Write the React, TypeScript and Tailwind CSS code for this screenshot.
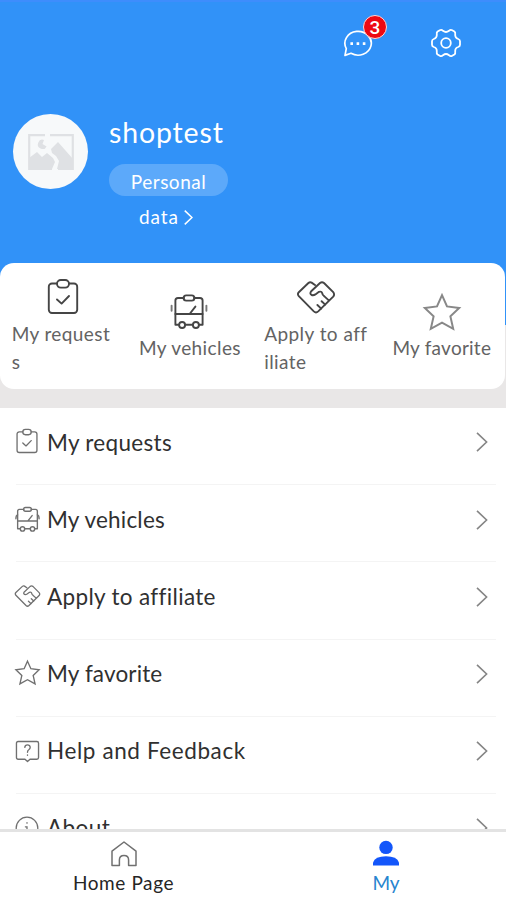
import type { ReactNode } from "react";

type IconProps = { className?: string; stroke?: number };

function ClipboardIcon({ className, stroke = 1.9 }: IconProps) {
  return (
    <svg viewBox="0 0 40 40" className={className} fill="none" stroke="currentColor" strokeWidth={stroke} strokeLinecap="round" strokeLinejoin="round">
      <path d="M14 5.5H9A3.2 3.2 0 0 0 5.8 8.7V31.8A3.2 3.2 0 0 0 9 35H31A3.2 3.2 0 0 0 34.2 31.8V8.7A3.2 3.2 0 0 0 31 5.5H26" />
      <rect x="14" y="2" width="12" height="7.6" rx="3.8" />
      <path d="M14 21.5L18.6 25.6L26 18" />
    </svg>
  );
}

function BusIcon({ className, stroke = 1.9, wrap = false }: IconProps & { wrap?: boolean }) {
  return (
    <svg viewBox="0 0 40 40" className={className} fill="none" stroke="currentColor" strokeWidth={stroke} strokeLinecap="round" strokeLinejoin="round">
      <path d="M15 6H9A2.6 2.6 0 0 0 6.4 8.6V32.8H9.6M16.6 32.8H23.4M30.4 32.8H33.6V8.6A2.6 2.6 0 0 0 31 6H25" />
      <rect x="14.6" y="3.4" width="10.8" height="5.2" rx="2.6" />
      <path d="M6.4 22H33.6M20.6 22L26.4 14.6" />
      <circle cx="13.1" cy="33" r="3" />
      <circle cx="26.9" cy="33" r="3" />
      {wrap ? <path d="M6.4 13.6Q4 14 4 19M33.6 13.6Q36 14 36 19" /> : <path d="M2.6 13.6V18.8M37.4 13.6V18.8" stroke="#777" />}
    </svg>
  );
}

function HandshakeIcon({ className, stroke = 1.9 }: IconProps) {
  return (
    <svg viewBox="0 0 40 40" className={className} fill="none" stroke="currentColor" strokeWidth={stroke} strokeLinecap="round" strokeLinejoin="round">
      <path d="M19 7L15.6 4.6Q14 3.6 12.4 5L2.8 14.2Q1 16 2.8 18.2L17.8 33.4Q20 35.4 22.2 33.4L37.2 18.6Q39 16.4 37.2 14.2L28 5Q26 3.4 24 5L15.2 13.2Q13.4 15.6 15.6 17Q17.6 17.6 19.4 16.4L23 13.8Q25.6 13 26.2 15.2Q26.4 17.2 28.4 18.4L32.8 22.4" />
      <path d="M25.6 23.2L29.2 26.6M21.4 27L25.2 30.6" />
    </svg>
  );
}

function StarIcon({ className, stroke = 2 }: IconProps) {
  return (
    <svg viewBox="0 0 40 40" className={className} fill="none" stroke="currentColor" strokeWidth={stroke} strokeLinejoin="miter">
      <path d="M20 3.2L25 14.4L37.2 15.9L28.4 24.4L31.2 36.8L20 30.6L8.8 36.8L11.6 24.4L2.8 15.9L15 14.4Z" />
    </svg>
  );
}

function HelpIcon({ className }: IconProps) {
  return (
    <svg viewBox="0 0 24 24" className={className} fill="none" stroke="currentColor" strokeWidth="1.3" strokeLinecap="round" strokeLinejoin="round">
      <path d="M3 2.4H21Q22.6 2.4 22.6 4V17.8Q22.6 19.4 21 19.4H14.4L12 21.6L9.6 19.4H3Q1.4 19.4 1.4 17.8V4Q1.4 2.4 3 2.4Z" />
      <path d="M9.4 8Q9.6 5.6 12 5.6T14.6 7.9Q14.6 9.4 13.2 10.3Q12 11 12 12.8M12 15.4V15.6" />
    </svg>
  );
}

function InfoIcon({ className }: IconProps) {
  return (
    <svg viewBox="0 0 24 24" className={className} fill="none" stroke="currentColor" strokeWidth="1.3" strokeLinecap="round">
      <circle cx="12" cy="12" r="10.8" />
      <path d="M12 6.6V7.2M10.4 10.8H12V17M10 17H14" />
    </svg>
  );
}

function Chevron({ className, stroke = 1.6 }: IconProps) {
  return (
    <svg viewBox="0 0 12 20" className={className} fill="none" stroke="currentColor" strokeWidth={stroke}>
      <path d="M1 0.8L10.6 10L1 19.2" />
    </svg>
  );
}

function Shortcut({ icon, children }: { icon: ReactNode; children: ReactNode }) {
  return (
    <div className="flex flex-1 flex-col items-center justify-center pt-1">
      <div className="-mt-1 mb-0.5 flex h-10 items-center">{icon}</div>
      <div className="-mb-0.5 w-[103px] whitespace-nowrap text-[19px] leading-7 text-[#636363]">{children}</div>
    </div>
  );
}

function MenuRow({ icon, label, spacing }: { icon: ReactNode; label: string; spacing: string }) {
  return (
    <li className="ml-4 mr-[10px] flex h-[77.2px] shrink-0 items-center border-b border-[#f4f4f4] pb-[7.4px]">
      <span className="-ml-0.5 flex w-[26px] shrink-0 justify-center text-[#707070]">{icon}</span>
      <span className={"ml-[7px] flex-1 whitespace-nowrap text-[22.5px] text-[#303030] " + spacing}>{label}</span>
      <Chevron className="mr-2 h-5 w-3 text-[#858585]" />
    </li>
  );
}

export default function App() {
  return (
    <div className="flex h-[900px] w-[506px] flex-col overflow-hidden bg-white font-['Lato',sans-serif]">
      <div className="flex min-h-0 flex-1 flex-col overflow-hidden">
        <header className="h-[263px] shrink-0 border-t-2 border-[#3e8dfc] bg-[#3192f8] text-white">
          <div className="flex h-[110px] justify-end pr-11 pt-6">
            <div className="relative mr-[57px] h-8 w-[30px]">
              <svg viewBox="0 0 30 30" className="mt-[2px] h-[30px] w-[30px]" fill="none" stroke="currentColor" strokeWidth="1.7" strokeLinejoin="round">
                <path d="M2 27.4L3.3 20.6A13.2 11.9 0 1 1 8 25.3Z" />
                <path d="M7.4 15.6H10M13.6 15.6H16.2M19.8 15.6H22.4" strokeWidth="2.8" />
              </svg>
              <span className="absolute -top-[11px] left-[20px] flex h-6 w-6 items-center justify-center rounded-full border border-[#ffd7d7] bg-[#ee0812] font-['Roboto',sans-serif] text-[19px] font-medium leading-none">3</span>
            </div>
            <svg viewBox="0 0 32 32" className="mt-px h-8 w-8" fill="none" stroke="currentColor" strokeWidth="1.8" strokeLinejoin="round">
              <path d="M9.8 3.2Q11.5 2.2 13 3.8Q16 6.2 19 3.8Q20.5 2.2 22.2 3.2L24.4 4.5Q25.6 5.5 25.2 7.3Q24.9 11 28.2 12Q30 12.6 30 14.2V17.8Q30 19.4 28.2 20Q24.9 21 25.2 24.7Q25.6 26.5 24.4 27.5L22.2 28.8Q20.5 29.8 19 28.2Q16 25.8 13 28.2Q11.5 29.8 9.8 28.8L7.6 27.5Q6.4 26.5 6.8 24.7Q7.1 21 3.8 20Q2 19.4 2 17.8V14.2Q2 12.6 3.8 12Q7.1 11 6.8 7.3Q6.4 5.5 7.6 4.5Z" />
              <circle cx="16" cy="16" r="4.8" />
            </svg>
          </div>
          <div className="flex pl-[13px]">
            <div className="mt-[2px] flex h-[75px] w-[75px] items-center justify-center rounded-full bg-[#f7f9fa]">
              <svg viewBox="0 0 46 36" className="h-9 w-[46px]">
                <path d="M17 1.2H1.2V34.8H24M22 1.2H44.8V34.8H30" fill="none" stroke="#dfe1e4" strokeWidth="2.2" />
                <path d="M16 6A4.6 4.6 0 1 0 18.6 12.4L14.5 10Z" fill="#dfe1e4" />
                <path d="M1 24L9 18L14 23L19 19L25 24L27 28L24 35H1Z" fill="#dfe1e4" />
                <path d="M23 15L30 8L45 25V35H29L31 27L28 22L24 19Z" fill="#dfe1e4" />
              </svg>
            </div>
            <div className="ml-[21px] flex w-[119px] flex-col">
              <div className="mt-[4px] h-[48px] whitespace-nowrap text-[28.5px] leading-[32px] tracking-[0.85px]">shoptest</div>
              <div className="flex h-8 items-center justify-center rounded-full bg-[#5ca9fa] pt-1 text-[19px] tracking-[0.5px]">Personal</div>
              <div className="mt-[7px] flex items-center pl-[30px] text-[19px] leading-7 tracking-[0.9px]">
                data <Chevron className="ml-[5px] h-[15px] w-[9px]" stroke={2} />
              </div>
            </div>
          </div>
        </header>
        <section className="h-[145px] shrink-0 bg-[linear-gradient(#3192f8_0px,#3192f8_62px,#e9e7e7_62px)]">
          <div className="mr-px flex h-[126px] rounded-[14px] bg-white">
            <Shortcut icon={<ClipboardIcon className="h-10 w-10 text-[#454545]" />}>
              <span className="tracking-[0.4px]">My request<br />s</span>
            </Shortcut>
            <Shortcut icon={<BusIcon className="h-10 w-10 text-[#454545]" />}>
              <span className="ml-px tracking-[0.4px]">My vehicles</span>
            </Shortcut>
            <Shortcut icon={<HandshakeIcon className="h-10 w-10 text-[#454545]" />}>
              <span className="tracking-[0.45px]">Apply to aff<br />iliate</span>
            </Shortcut>
            <Shortcut icon={<StarIcon className="h-10 w-10 text-[#888]" />}>
              <span className="ml-[2px] tracking-[0.25px]">My favorite</span>
            </Shortcut>
          </div>
        </section>
        <ul className="flex flex-col">
          <MenuRow label="My requests" spacing="tracking-[0.3px]" icon={<ClipboardIcon className="h-7 w-7 shrink-0" />} />
          <MenuRow label="My vehicles" spacing="tracking-[0.2px]" icon={<BusIcon wrap className="h-[29px] w-[29px] shrink-0" />} />
          <MenuRow label="Apply to affiliate" spacing="tracking-[0.33px]" icon={<HandshakeIcon className="h-[27px] w-[27px] shrink-0" />} />
          <MenuRow label="My favorite" spacing="tracking-[0.15px]" icon={<StarIcon className="mb-[2px] h-[27px] w-[27px] shrink-0" />} />
          <MenuRow label="Help and Feedback" spacing="tracking-[0.6px]" icon={<HelpIcon className="h-[25px] w-[25px]" />} />
          <MenuRow label="About" spacing="tracking-[0.4px]" icon={<InfoIcon className="mb-px h-6 w-6" />} />
        </ul>
      </div>
      <nav className="flex h-[71px] shrink-0 border-t-[3px] border-[#e3e3e3] bg-white text-[19px] leading-6 text-[#252525]">
        <div className="flex w-[247px] flex-col items-center pt-2">
          <svg viewBox="0 0 28 28" className="h-7 w-7" fill="none" stroke="#707070" strokeWidth="1.5" strokeLinejoin="round">
            <path d="M2 11.2L14 2L26 11.2V25.4H18.6V20Q18.6 15.5 14 15.5T9.4 20V25.4H2Z" />
          </svg>
          <span className="mt-[3px] tracking-[0.6px]">Home Page</span>
        </div>
        <div className="flex flex-1 flex-col items-center pl-[19px] pt-2">
          <svg viewBox="0 0 28 28" className="h-7 w-7" fill="#1356fa">
            <circle cx="14" cy="7.4" r="6.7" />
            <path d="M1 25.4V22.6Q3 16.2 14 16.2T27 22.6V25.4Z" />
          </svg>
          <span className="mt-[3px] text-[#2785cf]">My</span>
        </div>
      </nav>
    </div>
  );
}
